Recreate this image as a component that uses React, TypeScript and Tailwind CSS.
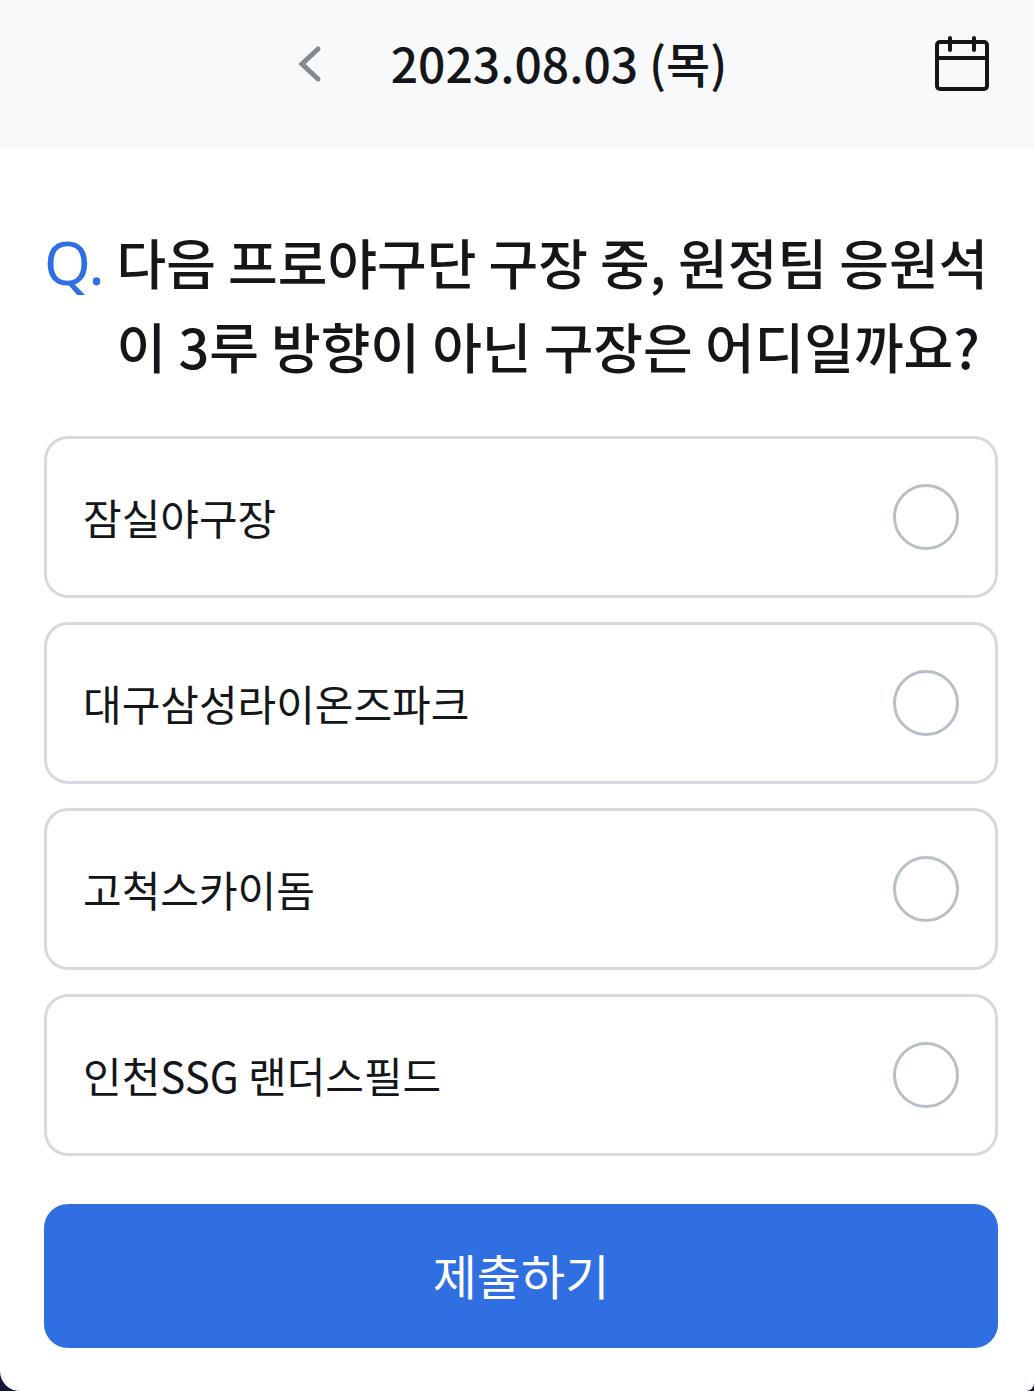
import React, { useState } from "react";

const stadiums = ["잠실야구장", "대구삼성라이온즈파크", "고척스카이돔", "인천SSG 랜더스필드"];

export default function App() {
  const [picked, setPicked] = useState<string | null>(null);
  return (
    <div className="bg-[#14163a] font-['Noto_Sans_CJK_KR',sans-serif] text-[#141619]">
      <div className="min-h-screen overflow-hidden rounded-br-lg rounded-bl-[20px] bg-white">
        <header className="grid h-37 grid-cols-[1fr_auto_1fr] items-start bg-[#f8f9fb] px-11 pt-8">
          <div className="col-start-2 flex h-16 items-center gap-16 pr-3">
            <button type="button" aria-label="이전 날짜" className="text-[#838993]">
              <svg width="32" height="40" viewBox="0 0 32 40" fill="none" stroke="currentColor" strokeWidth="5" strokeLinecap="round">
                <path d="M23 5 7 20l16 15" />
              </svg>
            </button>
            <h1 className="pb-1 text-5xl leading-15 font-medium">2023.08.03 (목)</h1>
          </div>
          <div className="flex h-15 items-center justify-end">
            <button type="button" aria-label="달력">
              <svg width="56" height="60" viewBox="0 0 56 60" fill="none" stroke="currentColor" strokeWidth="4" strokeLinecap="round">
                <rect x="3" y="10" width="50" height="47" rx="3" />
                <path d="M3 26h50M16 6v12M40 6v12" />
              </svg>
            </button>
          </div>
        </header>
        <form className="pt-18 pr-9 pb-10 pl-11" onSubmit={(e) => e.preventDefault()}>
          <fieldset>
            <legend className="flex gap-3 text-[54px] leading-[84px] font-medium">
              <span className="font-['Noto_Sans'] text-[60px] font-normal text-[#306fe1]">Q.</span>
              <span className="min-w-0">다음 프로야구단 구장 중, 원정팀 응원석이 3루 방향이 아닌 구장은 어디일까요?</span>
            </legend>
            <div className="mt-12 grid gap-6">
              {stadiums.map((name) => (
                <label key={name} className="flex h-[162px] items-center justify-between rounded-3xl border-3 border-[#d7d9e0] px-9">
                  <span className="text-[42px] leading-16">{name}</span>
                  <input
                    type="radio"
                    name="stadium"
                    checked={picked === name}
                    onChange={() => setPicked(name)}
                    className="size-[66px] appearance-none rounded-full border-3 border-[#b9bfc8] checked:border-[18px] checked:border-[#306fe1]"
                  />
                </label>
              ))}
            </div>
          </fieldset>
          <button type="submit" className="mt-12 h-36 w-full rounded-3xl bg-[#306fe1] pb-1 text-5xl text-white">
            제출하기
          </button>
        </form>
      </div>
    </div>
  );
}
